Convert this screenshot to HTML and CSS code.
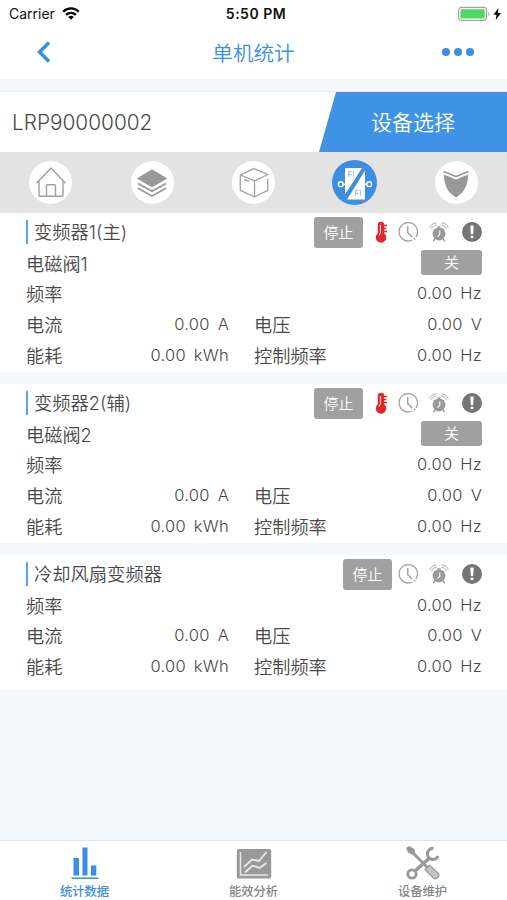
FILE: index.html
```html
<!DOCTYPE html>
<html lang="zh-CN">
<head>
    <meta charset="UTF-8">
    <meta name="viewport" content="width=device-width, initial-scale=1.0">
    <title>单机统计</title>
    <link rel="stylesheet" href="styles.css">
</head>
<body>
    <!-- Shared icons -->
    <svg class="icon-defs">
        <symbol id="icon-temp" viewBox="0 0 14 22">
            <path d="M3.800 4a3.200 3.200 0 0 1 6.400 0v8.200a5.300 5.300 0 1 1-6.400 0z" fill="#e3282b"/>
            <path d="M9.500 4.500H13M9.500 7.500h2.800M9.500 10.500H13" stroke="#e3282b" stroke-width="1.300"/>
            <path d="M6.400 4v8l-1.500 2.500" fill="none" stroke="#fff" stroke-width=".9"/>
        </symbol>
        <symbol id="icon-clock" viewBox="0 0 20 20">
            <path d="M18 14.8A9.2 9.2 0 1 0 14.4 18" fill="none" stroke="#a3a3a3" stroke-width="1.3"/>
            <path d="M9.7 4v6.5l4.5 4.7" fill="none" stroke="#a3a3a3" stroke-width="1.5"/>
            <circle cx="16.5" cy="16.8" r="1" fill="#a3a3a3"/>
        </symbol>
        <symbol id="icon-alarm" viewBox="0 0 20 20">
            <circle cx="10" cy="12" r="6.4" fill="#999"/>
            <path d="M6 16.5l-1.6 2.8M14 16.5l1.6 2.8M5 7l1.5 1.5M15 7l-1.5 1.5M8.5 5h3" stroke="#999" stroke-width="1.5"/>
            <path d="M10.800 8.500v3.800l-2.300 2.300" fill="none" stroke="#fff" stroke-width="1.1"/>
            <path d="M.7 5.7C1.7 3 4 1 7.2.9M2.6 6.8C3.4 4.5 5 3.2 7.7 3M19.3 5.7C18.3 3 16 1 12.8.9M17.4 6.8C16.6 4.5 15 3.2 12.3 3" fill="none" stroke="#aaa" stroke-width="1"/>
        </symbol>
        <symbol id="icon-warn" viewBox="0 0 20 20">
            <circle cx="10" cy="10" r="10" fill="#757575"/>
            <path d="M8.3 3.5h3.4l-.5 8.5H8.8z" fill="#fff"/>
            <circle cx="10" cy="14.8" r="1.5" fill="#fff"/>
        </symbol>
    </svg>

    <!-- Status bar -->
    <div class="status-bar">
        <div class="carrier">
            <span>Carrier</span>
            <svg width="18" height="13" viewBox="0 0 18 13">
                <g fill="none" stroke="#000" stroke-width="2.3">
                    <path d="M1.2 4.7a11 11 0 0 1 15.6 0"/>
                    <path d="M4.1 7.9a7 7 0 0 1 9.8 0"/>
                </g>
                <path d="M6.2 10.1a4 4 0 0 1 5.6 0L9 12.8z"/>
            </svg>
        </div>
        <div class="time">5:50 PM</div>
        <div class="battery">
            <svg width="44" height="16" viewBox="0 0 44 16">
                <rect x="1.600" y="1.300" width="28" height="13" rx="3" fill="#fff" stroke="#a5a5a5" stroke-width="1.2"/>
                <rect x="3.500" y="3.200" width="24.200" height="9.200" rx="1" fill="#4cd964"/>
                <path d="M31.200 5.500q2 2.300 0 4.600z" fill="#a5a5a5"/>
                <path d="M41.500 2l-5 6.800h3L38.700 14l5.300-7.100h-3.200z"/>
            </svg>
        </div>
    </div>

    <!-- Nav bar -->
    <div class="nav-bar">
        <svg class="back" width="14" height="22" viewBox="0 0 14 22">
            <path d="M12 1.5L2.600 11l9.400 9.500" fill="none" stroke="#3c8ee0" stroke-width="3.6"/>
        </svg>
        <h1>单机统计</h1>
        <div class="more"><i></i><i></i><i></i></div>
    </div>

    <!-- Device picker -->
    <div class="device">
        <div class="device-id">LRP90000002</div>
        <div class="device-select">设备选择</div>
    </div>

    <div class="tabs">
        <div class="tab">
            <span class="circle">
                <svg width="32" height="32" viewBox="0 0 32 32" fill="none" stroke="#a0a0a0" stroke-width="1.4" stroke-linejoin="round">
                    <path d="M1.5 16.3L16 1l14.5 15.300M4 14v14.300c0 .6.4 1 1 1h22c.6 0 1-.4 1-1V14M11.500 29.300V18.700c0-.6.4-1 1-1h7c.6 0 1 .4 1 1v10.600"/>
                </svg>
            </span>
        </div>
        <div class="tab">
            <span class="circle">
                <svg width="32" height="32" viewBox="0 0 32 32">
                    <path d="M16 2.3l15.3 9.2L16 20.3.8 11.5z" fill="#999"/>
                    <path d="M2 16.5l14 7.7 14-7.7M2 21.3l14 7.7 14-7.7" fill="none" stroke="#999" stroke-width="1.8"/>
                </svg>
            </span>
        </div>
        <div class="tab">
            <span class="circle">
                <svg width="32" height="32" viewBox="0 0 32 32" fill="none" stroke="#a0a0a0" stroke-width="1.3" stroke-linejoin="round">
                    <path d="M16 1.700L30 7.500 16.500 13.800 2.300 8v15.300L16.500 30V13.800M16.500 30l13.200-6.700V12M2.300 8L16 1.700M6 12.300l5 2.100"/>
                </svg>
            </span>
        </div>
        <div class="tab">
            <span class="circle active">
                <svg width="36" height="34" viewBox="0 0 36 34">
                    <path d="M8 2h17L8 28.5zM28 4.5v29H10z" fill="#fff"/>
                    <g fill="none" stroke="#fff" stroke-width="1.4">
                        <circle cx="3.800" cy="18.200" r="2.400"/>
                        <circle cx="32.200" cy="18.200" r="2.400"/>
                        <path d="M6 18.200h3M27 18.200h3"/>
                    </g>
                    <text class="fi" x="10.5" y="11">FI</text>
                    <text class="fi" x="17.5" y="29.8">FI</text>
                </svg>
            </span>
        </div>
        <div class="tab">
            <span class="circle">
                <svg width="28" height="30" viewBox="0 0 28 30">
                    <path d="M1.500 3.500L14 8.500l12.500-5" fill="none" stroke="#999" stroke-width="1.700"/>
                    <path d="M2 6.600l12 4.900 12-4.900C26.200 17 22.500 24.500 14 29.500 5.500 24.500 1.800 17 2 6.600z" fill="#999"/>
                </svg>
            </span>
        </div>
    </div>

    <!-- Inverter 1 -->
    <div class="card">
        <div class="row">
            <h2>变频器1(主)</h2>
            <div class="states">
                <span class="btn stop">停止</span>
                <svg class="temp"><use href="#icon-temp"/></svg>
                <svg class="state clock"><use href="#icon-clock"/></svg>
                <svg class="state alarm"><use href="#icon-alarm"/></svg>
                <svg class="state warn"><use href="#icon-warn"/></svg>
            </div>
        </div>
        <div class="row"><span class="label">电磁阀1</span><span class="btn off">关</span></div>
        <div class="row"><span class="label">频率</span><span class="value">0.00 Hz</span></div>
        <div class="row split">
            <div class="cell"><span class="label">电流</span><span class="value">0.00 A</span></div>
            <div class="cell"><span class="label">电压</span><span class="value">0.00 V</span></div>
        </div>
        <div class="row split">
            <div class="cell"><span class="label">能耗</span><span class="value">0.00 kWh</span></div>
            <div class="cell"><span class="label">控制频率</span><span class="value">0.00 Hz</span></div>
        </div>
    </div>

    <!-- Inverter 2 -->
    <div class="card">
        <div class="row">
            <h2>变频器2(辅)</h2>
            <div class="states">
                <span class="btn stop">停止</span>
                <svg class="temp"><use href="#icon-temp"/></svg>
                <svg class="state clock"><use href="#icon-clock"/></svg>
                <svg class="state alarm"><use href="#icon-alarm"/></svg>
                <svg class="state warn"><use href="#icon-warn"/></svg>
            </div>
        </div>
        <div class="row"><span class="label">电磁阀2</span><span class="btn off">关</span></div>
        <div class="row"><span class="label">频率</span><span class="value">0.00 Hz</span></div>
        <div class="row split">
            <div class="cell"><span class="label">电流</span><span class="value">0.00 A</span></div>
            <div class="cell"><span class="label">电压</span><span class="value">0.00 V</span></div>
        </div>
        <div class="row split">
            <div class="cell"><span class="label">能耗</span><span class="value">0.00 kWh</span></div>
            <div class="cell"><span class="label">控制频率</span><span class="value">0.00 Hz</span></div>
        </div>
    </div>

    <!-- Cooling fan -->
    <div class="card fan">
        <div class="row">
            <h2>冷却风扇变频器</h2>
            <div class="states">
                <span class="btn stop">停止</span>
                <svg class="state clock"><use href="#icon-clock"/></svg>
                <svg class="state alarm"><use href="#icon-alarm"/></svg>
                <svg class="state warn"><use href="#icon-warn"/></svg>
            </div>
        </div>
        <div class="row"><span class="label">频率</span><span class="value">0.00 Hz</span></div>
        <div class="row split">
            <div class="cell"><span class="label">电流</span><span class="value">0.00 A</span></div>
            <div class="cell"><span class="label">电压</span><span class="value">0.00 V</span></div>
        </div>
        <div class="row split">
            <div class="cell"><span class="label">能耗</span><span class="value">0.00 kWh</span></div>
            <div class="cell"><span class="label">控制频率</span><span class="value">0.00 Hz</span></div>
        </div>
    </div>

    <!-- Bottom menu -->
    <div class="footer">
        <div class="menu active">
            <svg width="36" height="36" viewBox="0 0 36 36" fill="#3c8ee0">
                <path d="M6.500 13h5.500v17.500H6.500zM15.500 2.500h5v28h-5zM24 20.500h5.300v10H24z"/>
                <path d="M4.500 32.500h27V34h-27z"/>
            </svg>
            <span>统计数据</span>
        </div>
        <div class="menu">
            <svg width="36" height="36" viewBox="0 0 36 36">
                <rect x=".8" y="4" width="34.400" height="29.500" rx="2" fill="#999"/>
                <g fill="none" stroke="#e8e8e8" stroke-width="1.500">
                    <path d="M4.500 7v23H32"/>
                    <path d="M8 22l8-7.500 7 1.500L30.500 7" stroke-width="1.900"/>
                    <path d="M9 27.500l7.500-7 7 2.500 7-5" stroke-width="1.900"/>
                </g>
            </svg>
            <span>能效分析</span>
        </div>
        <div class="menu">
            <svg width="36" height="36" viewBox="0 0 36 36">
                <path d="M10.500 25.500L24.500 13" stroke="#999" stroke-width="3.600"/>
                <circle cx="7" cy="29" r="4.200" fill="none" stroke="#999" stroke-width="2.800"/>
                <path d="M28.500 3.500a5.500 5.500 0 1 0 4.500 7.500" fill="none" stroke="#999" stroke-width="3.200"/>
                <path d="M5 5l18 18" stroke="#999" stroke-width="2.800"/>
                <path d="M1 3l3-2 5.500 3 .8 4-2.600 1.800L3 7.500z" fill="#999"/>
                <path d="M20 24.500l4.500-4.500 9.500 9c.500 2-2 5-4.700 5z" fill="#c4c4c4" stroke="#999" stroke-width="1.200"/>
            </svg>
            <span>设备维护</span>
        </div>
    </div>
</body>
</html>
```
FILE: styles.css
```css
* {
    box-sizing: border-box;
}

body {
    display: flex;
    flex-direction: column;
    height: 900px;
    margin: 0;
    background-color: #f4f8fb;
    color: #484848;
    font-family: Inter, "Noto Sans CJK SC", sans-serif;
    font-size: 18.2px;
    font-weight: 350;
    overflow: hidden;
}

.icon-defs {
    display: none;
}

svg {
    display: block;
    flex: none;
}

/* Status bar */
.status-bar {
    display: flex;
    align-items: center;
    height: 28px;
    padding: 0 6px 1px 9px;
    background-color: #fff;
    color: #111;
    font-size: 14px;
}

.status-bar > div {
    flex: 1;
}

.carrier {
    display: flex;
    align-items: center;
    gap: 7px;
    font-weight: 400;
}

.time {
    padding-left: 2px;
    font-weight: 600;
    letter-spacing: 0.5px;
    text-align: center;
}

.battery svg {
    margin-left: auto;
}

/* Nav bar */
.nav-bar {
    display: flex;
    justify-content: space-between;
    align-items: center;
    height: 51px;
    padding: 0 33px 3px 37px;
    background-color: #fff;
}

.nav-bar h1 {
    margin: 0 0 1px 14px;
    color: #3c8ee0;
    font-size: 20.6px;
    font-weight: 350;
}

.more {
    display: flex;
    gap: 4px;
}

.more i {
    width: 8px;
    height: 8px;
    border-radius: 50%;
    background-color: #3c8ee0;
}

/* Device picker */
.device {
    display: flex;
    height: 61px;
    margin-top: 12px;
    border-top: 1px solid #e9edef;
    background-color: #fff;
    line-height: 61px;
}

.device-id {
    flex: 1;
    padding-left: 12px;
    font-size: 20.8px;
}

.device-select {
    width: 188px;
    background-color: #4093e4;
    clip-path: polygon(17px 0, 100% 0, 100% 100%, 0 100%);
    color: #fff;
    font-size: 21px;
    line-height: 62px;
    text-align: center;
}

/* Icon tabs */
.tabs {
    display: flex;
    flex: none;
    height: 61px;
    background-color: #e3e3e3;
}

.tab {
    display: flex;
    flex: 1;
    justify-content: center;
    align-items: center;
}

.circle {
    display: flex;
    justify-content: center;
    align-items: center;
    width: 43px;
    height: 43px;
    border-radius: 50%;
    background-color: #fff;
}

.circle.active {
    width: 45px;
    height: 45px;
    background-color: #3c8ee0;
}

.fi {
    fill: #4a96e2;
    font-size: 8px;
}

/* Cards */
.card {
    height: 159px;
    margin-bottom: 12px;
    padding: 4px 25px 0 26px;
    background-color: #fff;
}

.card.fan {
    height: 135px;
}

.row {
    display: flex;
    justify-content: space-between;
    align-items: center;
    height: 30.6px;
    line-height: 30px;
}

.row h2 {
    margin: 0;
    padding: 1px 0 0 6px;
    border-left: 2px solid #55a5e8;
    font-size: 18.3px;
    font-weight: 350;
    line-height: 23px;
}

.split {
    gap: 26px;
}

.cell {
    display: flex;
    flex: 1;
    justify-content: space-between;
    align-items: center;
}

.cell:first-child {
    flex: none;
    width: 203px;
}

.split .cell + .cell {
    margin-left: -1px;
}

.label {
    padding-top: 2px;
}

.value {
    font-size: 16.5px;
    letter-spacing: 0.25px;
    word-spacing: 3px;
}

.states {
    display: flex;
    align-items: center;
}

.btn {
    border-radius: 3px;
    background-color: #a0a0a0;
    color: #fff;
    font-size: 15px;
    text-align: center;
}

.stop {
    width: 49px;
    height: 31px;
    margin-right: 6px;
    line-height: 31px;
}

.off {
    width: 61px;
    height: 25px;
    line-height: 25px;
}

.temp {
    width: 14px;
    height: 22px;
    margin: 0 10px 0 5px;
}

.state {
    width: 20px;
    height: 20px;
}

.alarm {
    margin: 0 13px 0 11px;
}

/* Bottom menu */
.footer {
    display: flex;
    height: 60px;
    margin-top: auto;
    border-top: 1px solid #dfe3e6;
    background-color: #fff;
}

.menu {
    display: flex;
    flex: 1;
    flex-direction: column;
    align-items: center;
    padding-top: 4px;
    color: #858585;
    font-size: 12.3px;
    font-weight: 500;
    line-height: 22px;
}

.menu.active {
    color: #3c8ee0;
}
```
